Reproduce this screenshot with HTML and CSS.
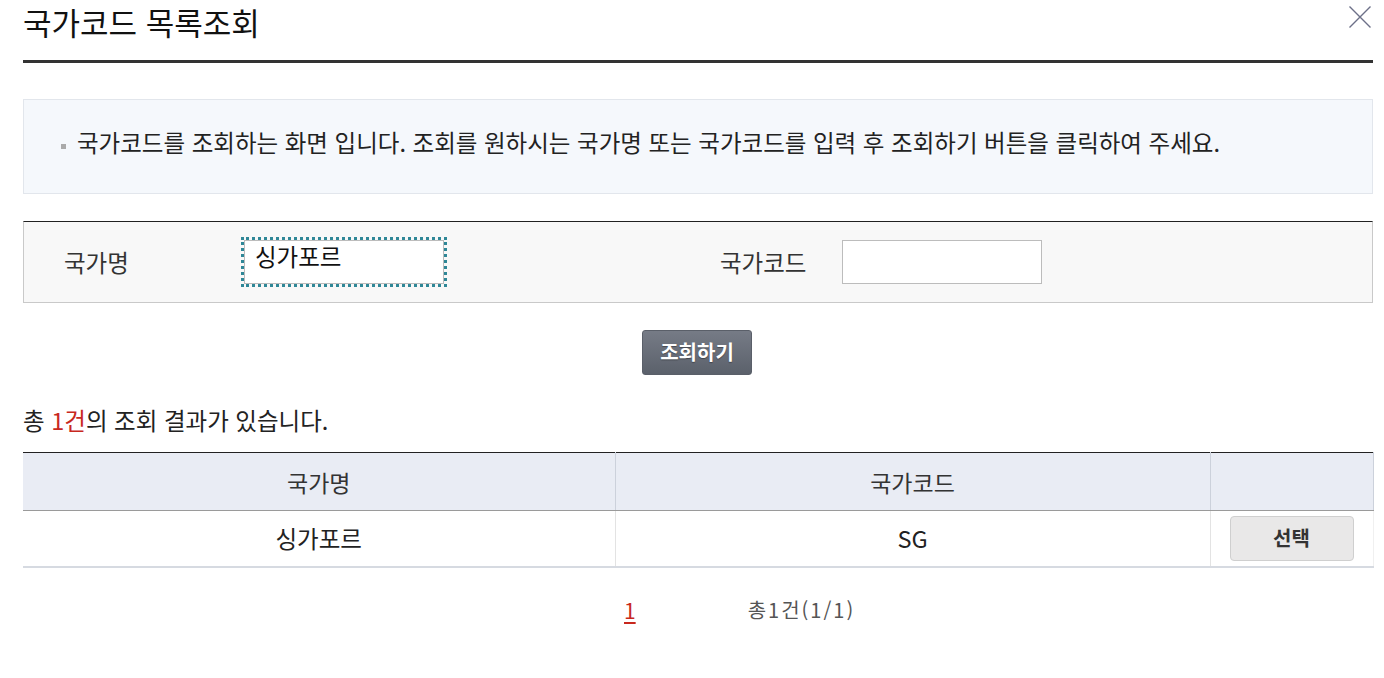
FILE: index.html
```html
<!DOCTYPE html>
<html lang="ko">
<head>
<meta charset="utf-8">
<title>국가코드 목록조회</title>
<link rel="stylesheet" href="styles.css">
</head>
<body>
<div class="popup">
  <header class="popup-head">
    <h1 class="popup-title">국가코드 목록조회</h1>
    <button class="close-btn" type="button" aria-label="닫기">
      <svg width="24" height="24" viewBox="0 0 24 24"><path d="M1.5 1.5 L22.5 22.5 M22.5 1.5 L1.5 22.5" stroke="#6c7088" stroke-width="1.4" fill="none"/></svg>
    </button>
  </header>

  <div class="info-box">
    <span class="bullet"></span>
    <p class="info-text">국가코드를 조회하는 화면 입니다. 조회를 원하시는 국가명 또는 국가코드를 입력 후 조회하기 버튼을 클릭하여 주세요.</p>
  </div>

  <div class="search-box">
    <label class="search-label first">국가명</label>
    <input class="search-input focused" type="text" value="싱가포르">
    <label class="search-label second">국가코드</label>
    <input class="search-input" type="text" value="">
  </div>

  <div class="btn-row">
    <button class="btn-search" type="button">조회하기</button>
  </div>

  <p class="result-count">총 <em class="red">1건</em>의 조회 결과가 있습니다.</p>

  <table class="list-table">
    <colgroup>
      <col class="c1"><col class="c2"><col class="c3">
    </colgroup>
    <thead>
      <tr><th>국가명</th><th>국가코드</th><th></th></tr>
    </thead>
    <tbody>
      <tr>
        <td>싱가포르</td>
        <td>SG</td>
        <td><button class="btn-select" type="button">선택</button></td>
      </tr>
    </tbody>
  </table>

  <div class="paging">
    <a class="page-num" href="#">1</a>
    <span class="page-total">총1건(1/1)</span>
  </div>
</div>
</body>
</html>
```

FILE: styles.css
```css
* { box-sizing: border-box; }
html, body { margin: 0; padding: 0; background: #fff; }
body {
  font-family: "Noto Sans CJK KR", "Noto Sans", sans-serif;
  color: #222;
}
.popup {
  width: 1350px;
  margin-left: 23px;
}
.popup-head {
  height: 63px;
  border-bottom: 3px solid #333;
  display: flex;
  justify-content: space-between;
  align-items: flex-start;
}
.popup-title {
  margin: 0;
  font-size: 31px;
  font-weight: 400;
  line-height: 44px;
  color: #111;
  padding-left: 0;
}
.close-btn {
  border: 0;
  background: none;
  padding: 0;
  margin: 5px 1px 0 0;
  width: 24px;
  height: 24px;
  display: block;
}
.close-btn svg { display: block; }

.info-box {
  margin-top: 36px;
  height: 95px;
  border: 1px solid #e2e6ec;
  background: #f5f8fc;
  display: flex;
  align-items: center;
  padding: 0 0 10px 37px;
}
.bullet {
  width: 5px;
  height: 5px;
  background: #aaaaaa;
  margin: 9px 11px 0 0;
  flex: none;
}
.info-text {
  margin: 0;
  font-size: 23.5px;
  line-height: 30px;
  color: #222;
}

.search-box {
  margin-top: 27px;
  height: 82px;
  border: 1px solid #c9c9c9;
  border-top: 1px solid #222;
  background: #f8f8f8;
  display: flex;
  align-items: center;
}
.search-label {
  font-size: 23.5px;
  line-height: 30px;
  color: #333;
}
.search-label.first { width: 220px; padding-left: 40px; }
.search-label.second { width: 122px; margin-left: 276px; }
.search-input {
  width: 200px;
  height: 44px;
  border: 1px solid #bcbcbc;
  background: #fff;
  font-family: "Noto Sans CJK KR", "Noto Sans", sans-serif;
  font-size: 23.5px;
  color: #111;
  padding: 0 10px 12px;
  margin: 0 0 1px;
}
.search-input.focused {
  outline: 3px dotted #2f8797;
  outline-offset: 0;
}

.btn-row {
  margin-top: 27px;
  display: flex;
  justify-content: center;
  padding-right: 2px;
}
.btn-search {
  width: 110px;
  height: 45px;
  border: 1px solid #5a5f69;
  border-radius: 3px;
  background: linear-gradient(#767b86, #5b616b);
  color: #fff;
  font-family: "Noto Sans CJK KR", "Noto Sans", sans-serif;
  font-size: 20px;
  font-weight: 700;
  padding: 0 0 3px;
  text-shadow: 0 1px 1px rgba(0,0,0,0.35);
}

.result-count {
  margin: 30px 0 0;
  font-size: 23.5px;
  line-height: 30px;
  color: #222;
  padding-left: 0;
}
.red { font-style: normal; color: #c8281e; }

.list-table {
  margin-top: 17px;
  width: 1350px;
  border-collapse: collapse;
  table-layout: fixed;
  border-top: 1px solid #222;
}
.list-table col.c1 { width: 592px; }
.list-table col.c2 { width: 595px; }
.list-table col.c3 { width: 163px; }
.list-table th {
  height: 58px;
  background: #e9ecf4;
  font-weight: 400;
  font-size: 23px;
  color: #333;
  border-bottom: 1px solid #9a9a9a;
  border-right: 1px solid #ccd1db;
  padding: 0;
}
.list-table td {
  height: 56px;
  text-align: center;
  font-size: 23.5px;
  color: #222;
  border-bottom: 2px solid #d6dae1;
  border-right: 1px solid #e3e3e3;
  padding: 0;
}
.list-table td:last-child { border-right: 1px solid #f0f0f0; }
.btn-select {
  width: 124px;
  height: 45px;
  border: 1px solid #cfcfcf;
  border-radius: 4px;
  background: #e9e8e8;
  color: #333;
  font-family: "Noto Sans CJK KR", "Noto Sans", sans-serif;
  font-size: 20px;
  font-weight: 700;
  padding: 0 0 2px;
  margin-top: 0;
  display: inline-block;
}

.paging {
  margin-top: 24px;
  display: flex;
  align-items: center;
  padding-left: 601px;
  height: 36px;
}
.page-num {
  font-size: 21px;
  color: #c8281e;
  text-decoration: underline;
  text-underline-offset: 3px;
  line-height: 30px;
}
.page-total {
  margin-left: 112px;
  font-size: 20px;
  letter-spacing: 2px;
  color: #555;
  line-height: 30px;
}
```
